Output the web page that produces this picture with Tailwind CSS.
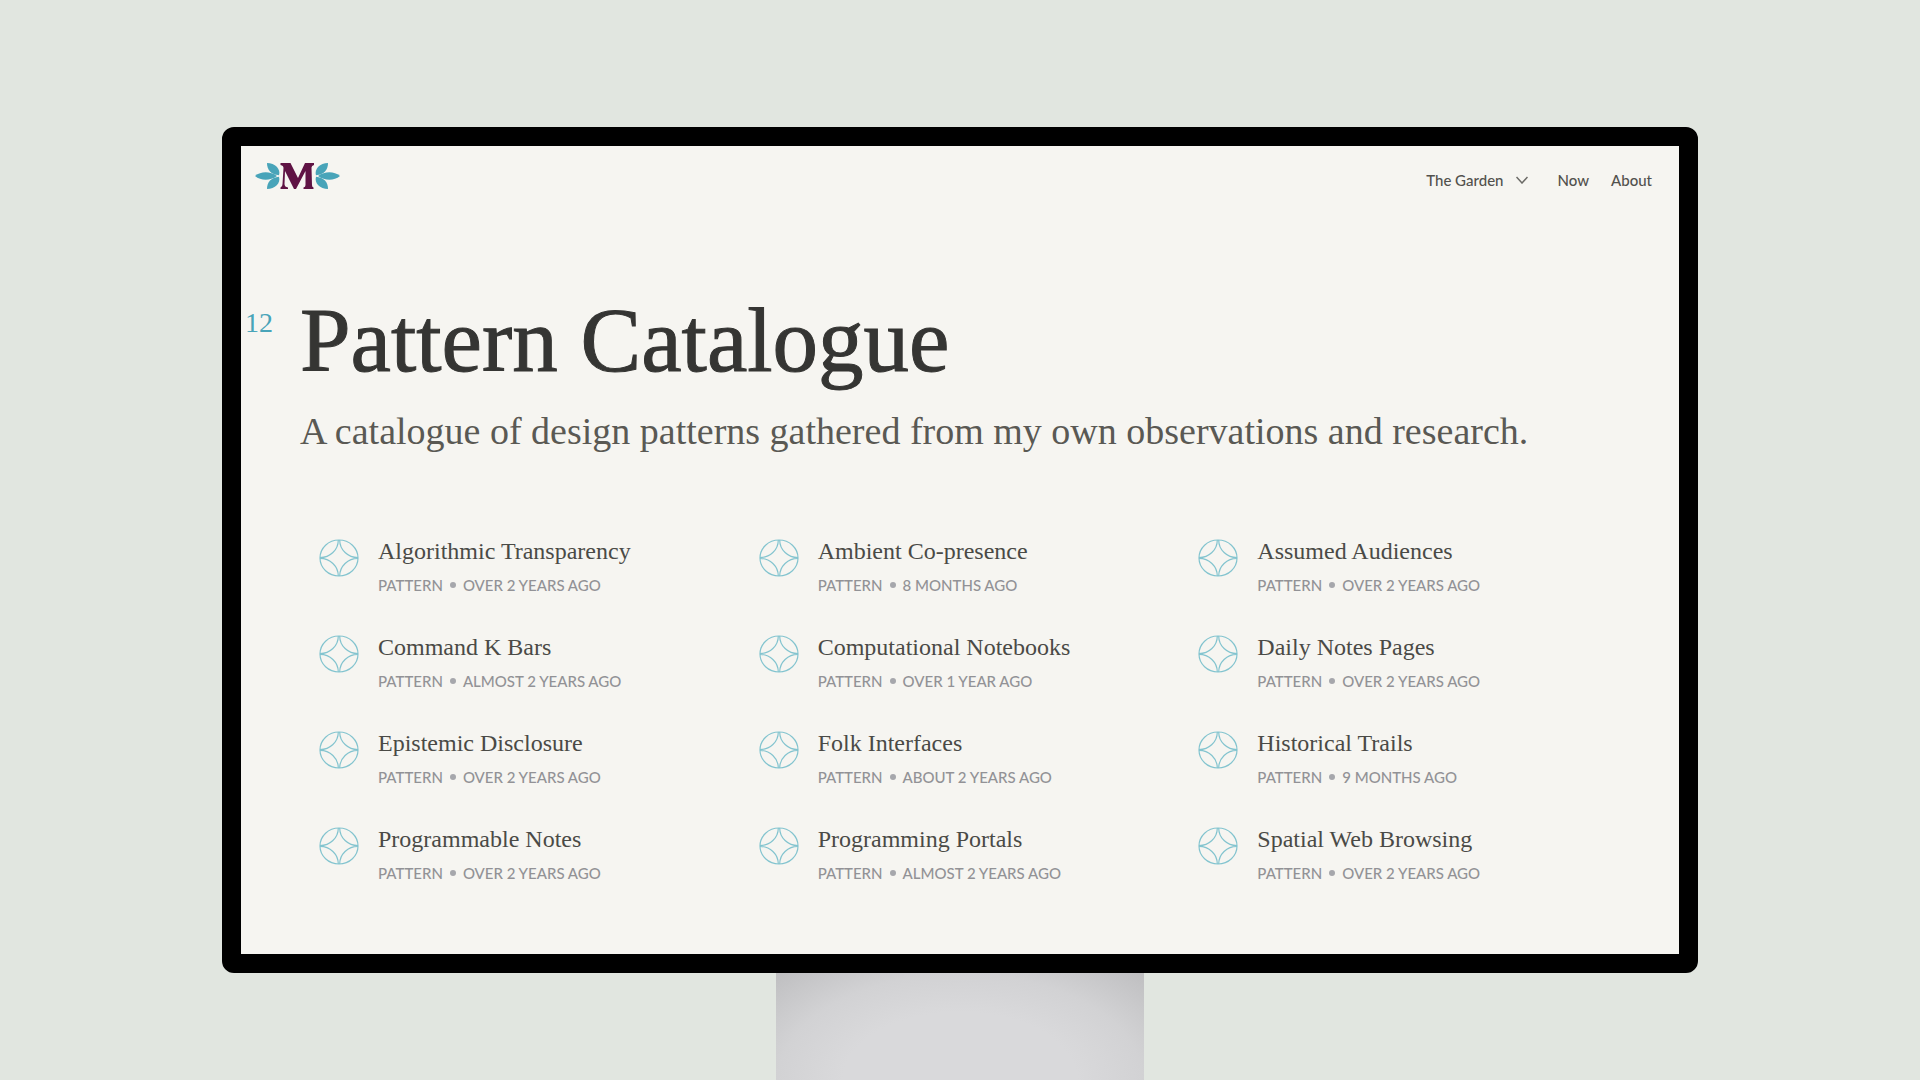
<!DOCTYPE html>
<html lang="en">
<head>
<meta charset="utf-8">
<title>Pattern Catalogue</title>
<script src="https://cdn.jsdelivr.net/npm/@tailwindcss/browser@4"></script>
</head>
<body class="min-h-screen overflow-hidden bg-[#e1e6e0] px-[222px] pt-[127px] flex flex-col font-['Lato',sans-serif]">
<svg class="hidden">
  <symbol id="pattern" viewBox="0 0 40 38" fill="none" stroke="#83c4cf" stroke-width="1.200">
    <ellipse cx="20" cy="19" rx="19" ry="18"/>
    <path d="M19.300 1C19.300 11 11 18.600 1 18.600M20.700 1C20.700 11 29 18.600 39 18.600M19.300 37C19.300 27 11 19.400 1 19.400M20.700 37C20.700 27 29 19.400 39 19.400"/>
  </symbol>
</svg>
<div class="rounded-xl border-[19px] border-black bg-[#f6f5f1] min-h-[846px]">
  <header class="flex items-start justify-between pl-[14px] pr-[27px] pt-4">
    <a href="#" aria-label="Home">
      <svg class="block w-[85px] h-7" viewBox="0 0 85 28">
        <g id="leaves" fill="#48a4b9">
          <path d="M0 14C6 9 15 9 22 14C15 19 6 19 0 14Z"/>
          <path d="M12 1C20 1 26 7 24 13.300C16 12.500 12 8 12 1Z"/>
          <path d="M12 27C20 27 26 21 24 14.700C16 15.500 12 20 12 27Z"/>
        </g>
        <use href="#leaves" transform="translate(85 0) scale(-1 1)"/>
        <path fill="#5f1344" d="M25.500 1H35.500L43 16L50 1H59V3Q56.500 3.500 56.500 5.500L57 23Q57 25 58.500 25.500V27H48.500V25.500Q50.500 25 50.500 23V9L41 27H39L30 9L29.500 22Q29.500 25 33 25.500V27H25.500V25.500Q27.500 25 27.500 22L28.500 6Q28.500 3.500 25.500 3Z"/>
      </svg>
    </a>
    <nav class="flex items-center gap-[22px] pt-1.5 text-[15px] leading-6 font-medium text-[#52514d]">
      <button class="flex items-center gap-3 pr-2">The Garden
        <svg class="w-3 h-2" viewBox="0 0 12 8" fill="none" stroke="#6b6a66" stroke-width="1.500"><path d="M0.500 1L6 7L11.500 1"/></svg>
      </button>
      <a href="#">Now</a>
      <a href="#">About</a>
    </nav>
  </header>
  <main class="pl-[59px] pr-[41px] pt-[99px] font-['Liberation_Serif',serif]">
    <div class="relative">
      <span class="absolute right-full top-4 mr-[27px] text-[28px] leading-8 text-[#48a4b9]">12</span>
      <h1 class="text-[91px] leading-[100px] text-[#353533] [-webkit-text-stroke:1px_#353533]">Pattern Catalogue</h1>
    </div>
    <p class="mt-4 text-[38px] leading-12 text-[#5a5954]">A catalogue of design patterns gathered from my own observations and research.</p>
    <ul id="grid" class="mt-20 pl-[19px] grid grid-cols-3 gap-y-[34px]"></ul>
  </main>
</div>
<div class="mx-auto w-[368px] h-[107px] shrink-0 bg-[radial-gradient(ellipse_at_50%_100%,#d9d9db_45%,#d2d2d4_70%,#b8b8ba_110%)]"></div>
<script>
const items = [
  ["Algorithmic Transparency", "over 2 years ago"], ["Ambient Co-presence", "8 months ago"], ["Assumed Audiences", "over 2 years ago"],
  ["Command K Bars", "almost 2 years ago"], ["Computational Notebooks", "over 1 year ago"], ["Daily Notes Pages", "over 2 years ago"],
  ["Epistemic Disclosure", "over 2 years ago"], ["Folk Interfaces", "about 2 years ago"], ["Historical Trails", "9 months ago"],
  ["Programmable Notes", "over 2 years ago"], ["Programming Portals", "almost 2 years ago"], ["Spatial Web Browsing", "over 2 years ago"]
];
document.getElementById("grid").innerHTML = items.map(([title, age]) => `
  <li><a href="#" class="flex gap-[19px]">
    <svg class="w-10 h-[38px] mt-1 shrink-0"><use href="#pattern"/></svg>
    <div>
      <h2 class="text-2xl leading-8 text-[#4a4a46]">${title}</h2>
      <p class="mt-1.5 flex items-center gap-[7px] font-['Lato',sans-serif] text-[15px] leading-6 font-medium uppercase text-[#929296]"><span>Pattern</span><span class="size-1.5 rounded-full bg-[#a6a7ac]"></span><span>${age}</span></p>
    </div>
  </a></li>`).join("");
</script>
</body>
</html>
